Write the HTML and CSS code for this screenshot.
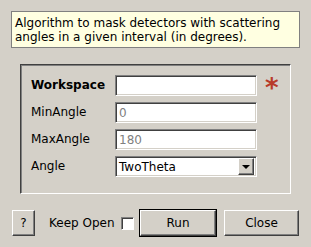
FILE: index.html
```html
<!DOCTYPE html>
<html lang="en">
<head>
    <meta charset="UTF-8">
    <title>MaskAngle</title>
    <link rel="stylesheet" href="styles.css">
</head>
<body>
<div class="dialog">
    <div class="desc">Algorithm to mask detectors with scattering angles in a given interval (in degrees).</div>

    <div class="frame">
        <div class="props">
            <label class="lbl bold">Workspace</label>
            <input type="text" class="field">
            <span class="req">*</span>

            <label class="lbl">MinAngle</label>
            <input type="text" class="field" placeholder="0">
            <span></span>

            <label class="lbl">MaxAngle</label>
            <input type="text" class="field" placeholder="180">
            <span></span>

            <label class="lbl">Angle</label>
            <div class="field combo">
                <span class="combo-txt">TwoTheta</span>
                <span class="combo-btn"><span class="arrow"></span></span>
            </div>
            <span></span>
        </div>
    </div>

    <div class="footer">
        <button class="btn help">?</button>
        <span class="keep">Keep Open</span>
        <span class="check"></span>
        <button class="btn run">Run</button>
        <button class="btn close">Close</button>
    </div>
</div>
</body>
</html>
```

FILE: styles.css
```css
*{
    margin: 0;
    padding: 0;
    box-sizing: border-box;
}
body{
    background-color: #d4d0c8;
    font-family: "DejaVu Sans", sans-serif;
    font-size: 12px;
    color: #000;
}
.dialog{
    width: 311px;
    height: 247px;
    padding: 11px 0 0 11px;
}
.desc{
    width: 289px;
    height: 37px;
    background-color: #ffffe1;
    border: 1px solid #808080;
    padding: 4px 3px 0;
    line-height: 14px;
}
.frame{
    margin: 16px 0 0 9px;
    width: 271px;
    height: 130px;
    border: 1px solid;
    border-color: #404040 #fff #fff #404040;
    box-shadow: inset 1px 1px 0 #808080;
    padding: 10px 0 0 10px;
}
.props{
    display: grid;
    grid-template-columns: 76px 142px auto;
    grid-auto-rows: 21px;
    row-gap: 6px;
    column-gap: 8px;
    align-items: center;
}
.lbl{
    line-height: 21px;
}
.bold{
    font-weight: bold;
}
.field{
    height: 21px;
    width: 142px;
    background-color: #fff;
    border: 1px solid;
    border-color: #808080 #fff #fff #808080;
    box-shadow: inset 1px 1px 0 #404040, inset -1px -1px 0 #d4d0c8;
    font-family: "DejaVu Sans", sans-serif;
    font-size: 12px;
    padding: 0 3px;
    outline: none;
}
.field::placeholder{
    color: #808080;
}
.req{
    color: #b83a2a;
    font-weight: bold;
    font-size: 26px;
    line-height: 21px;
    height: 21px;
    padding-top: 3px;
}
.combo{
    display: flex;
    align-items: center;
    padding: 2px 2px 2px 3px;
}
.combo-txt{
    flex: 1;
}
.combo-btn{
    width: 16px;
    height: 17px;
    background-color: #d4d0c8;
    border: 1px solid;
    border-color: #fff #404040 #404040 #fff;
    box-shadow: inset -1px -1px 0 #808080;
    display: flex;
    align-items: center;
    justify-content: center;
}
.arrow{
    width: 0;
    height: 0;
    border-left: 4px solid transparent;
    border-right: 4px solid transparent;
    border-top: 4px solid #000;
}
.footer{
    display: flex;
    align-items: center;
    margin-top: 16px;
    padding-left: 1px;
}
.btn{
    height: 26px;
    background-color: #d4d0c8;
    border: 1px solid;
    border-color: #fff #404040 #404040 #fff;
    box-shadow: inset -1px -1px 0 #808080;
    font-family: "DejaVu Sans", sans-serif;
    font-size: 12px;
    color: #000;
}
.help{
    width: 23px;
    margin-right: 14px;
}
.keep{
    width: 72px;
}
.check{
    width: 13px;
    height: 13px;
    background-color: #fff;
    border: 1px solid;
    border-color: #808080 #fff #fff #808080;
    box-shadow: inset 1px 1px 0 #404040;
    margin-right: 6px;
}
.run{
    width: 76px;
    outline: 1px solid #000;
    margin-right: 8px;
}
.close{
    width: 75px;
}
```
